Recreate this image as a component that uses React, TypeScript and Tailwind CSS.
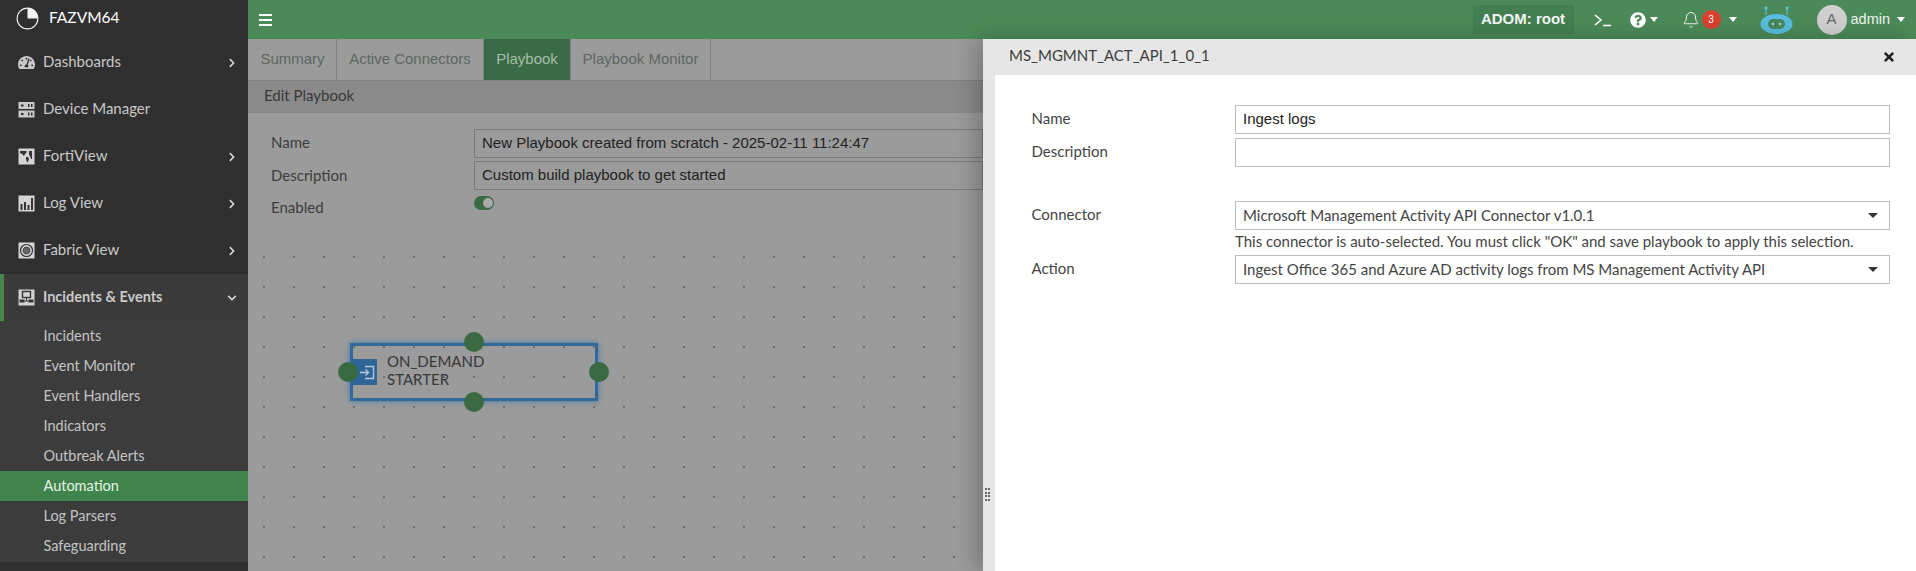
import React from "react";
import { FaQuestionCircle, FaTachometerAlt, FaChevronRight, FaChevronDown, FaTimes } from "react-icons/fa";
import { Bell } from "lucide-react";

const lato = "font-['Lato','Noto_Sans',sans-serif]";
const arial = "font-['Liberation_Sans',Arial,sans-serif]";

function Tile({ children }: { children: React.ReactNode }) {
  return <svg width="17" height="17" viewBox="0 0 17 17" className="shrink-0">{children}</svg>;
}

const DeviceIcon = () => (
  <Tile>
    <rect x="0.5" y="1" width="16" height="7" fill="#c9c9c9" />
    <rect x="0.5" y="9.5" width="16" height="7" fill="#c9c9c9" />
    <rect x="3" y="3.5" width="2.5" height="2" fill="#333" />
    <rect x="3" y="12" width="2.5" height="2" fill="#333" />
    <rect x="10" y="3" width="1.5" height="3" fill="#333" />
    <rect x="13" y="3" width="1.5" height="3" fill="#333" />
    <rect x="10" y="11.5" width="1.5" height="3" fill="#333" />
    <rect x="13" y="11.5" width="1.5" height="3" fill="#333" />
  </Tile>
);
const GlobeIcon = () => (
  <Tile>
    <rect x="0.5" y="0.5" width="16" height="16" fill="#d4d4d4" />
    <path d="M2 3h6l1 1-2 2-1 2-2-2-2-1zM8 9l2 0 1 2-1 3-1 0-1-3zM11 3h3v8l-1 0-1-3-1-1z" fill="#333" />
  </Tile>
);
const LogIcon = () => (
  <Tile>
    <rect x="0.5" y="0.5" width="16" height="16" fill="#d4d4d4" />
    <rect x="2.5" y="9" width="2" height="6" fill="#333" />
    <rect x="6" y="7" width="2" height="8" fill="#333" />
    <rect x="9.5" y="10" width="2" height="5" fill="#333" />
    <rect x="13" y="3" width="2" height="12" fill="#333" />
  </Tile>
);
const FabricIcon = () => (
  <Tile>
    <rect x="0.5" y="0.5" width="16" height="16" fill="#d4d4d4" />
    <circle cx="8.5" cy="8.5" r="6" fill="none" stroke="#333" strokeWidth="1.2" />
    <circle cx="8.5" cy="8.5" r="3.4" fill="#666" stroke="#333" strokeWidth="0.8" />
  </Tile>
);
const IncidentIcon = () => (
  <Tile>
    <rect x="0.5" y="0.5" width="16" height="16" fill="#d4d4d4" />
    <rect x="4.5" y="2.5" width="8" height="6" fill="none" stroke="#333" strokeWidth="1.4" />
    <rect x="1.5" y="10.5" width="5" height="3" fill="#333" />
    <rect x="10.5" y="10.5" width="5" height="3" fill="#333" />
    <path d="M8.5 8.5v3M6.5 12h4" stroke="#333" />
  </Tile>
);

const topItems = [
  { label: "Dashboards", icon: <FaTachometerAlt className="text-[17px] text-[#c9c9c9] shrink-0" />, arrow: true },
  { label: "Device Manager", icon: <DeviceIcon />, arrow: false },
  { label: "FortiView", icon: <GlobeIcon />, arrow: true },
  { label: "Log View", icon: <LogIcon />, arrow: true },
  { label: "Fabric View", icon: <FabricIcon />, arrow: true },
];
const subItems = ["Incidents", "Event Monitor", "Event Handlers", "Indicators", "Outbreak Alerts", "Automation", "Log Parsers", "Safeguarding"];

function Sidebar() {
  return (
    <aside className={`w-[248px] shrink-0 h-full bg-[#2f2f2f] flex flex-col ${lato}`}>
      <div className="h-[39px] flex items-center pl-[16px] pb-[3px] gap-[10px] text-white text-[15.5px]">
        <svg width="23" height="23" viewBox="0 0 23 23">
          <circle cx="11.5" cy="11.5" r="10.4" fill="none" stroke="#f2f2f2" strokeWidth="1.1" />
          <path d="M11.5 1A10.5 10.5 0 0 1 22 11.5H11.5Z" fill="#f2f2f2" />
        </svg>
        <span>FAZVM64</span>
      </div>
      {topItems.map((it) => (
        <div key={it.label} className="h-[47px] flex items-center pl-[18px] pr-[11px] text-[15px] text-[#c9c9c9]">
          <span className="w-[25px] flex">{it.icon}</span>
          <span className="flex-1 relative -top-[1px]">{it.label}</span>
          {it.arrow && <FaChevronRight className="text-[10px] text-[#d8d8d8]" />}
        </div>
      ))}
      <div className="h-[47px] flex items-center bg-[#3a3a3a] border-l-[4px] border-[#47874f] pl-[14px] pr-[11px] text-[14.5px] font-bold text-[#c9c9c9]">
        <span className="w-[25px] flex"><IncidentIcon /></span>
        <span className="flex-1 relative -top-[1px]">Incidents &amp; Events</span>
        <FaChevronDown className="text-[10px] text-[#d8d8d8]" />
      </div>
      <div className="bg-[#3c3c3c] pb-[1px]">
        {subItems.map((s) => (
          <div
            key={s}
            className={`h-[30px] flex items-center pl-[43.5px] text-[14.5px] ${s === "Automation" ? "bg-[#41834c] text-[#e4f5e4]" : "text-[#c4c4c4]"}`}
          >
            {s}
          </div>
        ))}
      </div>
    </aside>
  );
}

function TopBar() {
  return (
    <header className={`h-[39px] shrink-0 bg-[#4b8a58] flex items-center text-white ${arial}`}>
      <div className="ml-[11px] flex flex-col gap-[3px] w-[13px]">
        <span className="h-[2px] bg-white" />
        <span className="h-[2px] bg-white" />
        <span className="h-[2px] bg-white" />
      </div>
      <div className="ml-auto flex items-center h-full">
        <div className="h-[29px] w-[101px] bg-[#437f50] flex items-center justify-center text-[15px] font-bold text-[#f4f4f4]">ADOM: root</div>
        <svg width="18" height="14" viewBox="0 0 18 14" className="ml-[20px]" fill="none" stroke="#fff" strokeWidth="1.6">
          <path d="M1 2l6 5-6 5" />
          <path d="M9 12.5h8" />
        </svg>
        <FaQuestionCircle className="ml-[18px] text-[16px] text-white" />
        <span className="ml-[4px] w-0 h-0 border-x-[4.5px] border-x-transparent border-t-[5px] border-t-white" />
        <Bell size={18} strokeWidth={1.2} className="ml-[24px] text-white" />
        <span className="ml-[2px] w-[19px] h-[19px] rounded-full bg-[#d8402f] text-[10px] text-white flex items-center justify-center">3</span>
        <span className="ml-[8px] w-0 h-0 border-x-[4.5px] border-x-transparent border-t-[5px] border-t-white" />
        <svg width="33" height="30" viewBox="0 0 33 30" className="ml-[23px]">
          <path d="M6 2v8M27 2v8" stroke="#5cc0de" strokeWidth="1.2" />
          <circle cx="6" cy="3" r="1.6" fill="#5cc0de" />
          <circle cx="27" cy="3" r="1.6" fill="#5cc0de" />
          <ellipse cx="16.5" cy="19" rx="16" ry="10" fill="#58bde0" />
          <rect x="8" y="14" width="17" height="10" rx="5" fill="#47875a" />
          <circle cx="13" cy="19" r="1.2" fill="#9fd8ea" />
          <circle cx="20" cy="19" r="1.2" fill="#9fd8ea" />
        </svg>
        <span className="ml-[24px] w-[30px] h-[30px] rounded-full bg-[#cfcfcf] text-[#666] text-[15px] flex items-center justify-center">A</span>
        <span className="ml-[4px] text-[14.5px] text-[#eef5ef]">admin</span>
        <span className="ml-[7px] mr-[11px] w-0 h-0 border-x-[4.5px] border-x-transparent border-t-[5px] border-t-white" />
      </div>
    </header>
  );
}

const tabs = [
  { label: "Summary", w: "w-[88px]" },
  { label: "Active Connectors", w: "w-[147px]" },
  { label: "Playbook", w: "w-[87px]", active: true },
  { label: "Playbook Monitor", w: "w-[140px]" },
];

function Main() {
  const row = `flex items-start h-[32px] ${lato} text-[15px] text-[#3d3d3d]`;
  const input = `flex-1 h-[29px] border border-[#7a7a7a] flex items-center pl-[7px] text-[15px] text-[#222] whitespace-nowrap ${arial}`;
  return (
    <main className="flex-1 min-w-0 h-full flex flex-col bg-[#9b9b9b] overflow-hidden">
      <div className={`h-[42px] shrink-0 flex border-b border-[#7f7f7f] pl-[1px] ${arial} text-[15px]`}>
        {tabs.map((t) => (
          <div
            key={t.label}
            className={`${t.w} flex items-center justify-center border-r border-[#808080] ${t.active ? "bg-[#3a6a46] text-[#a5bfa9]" : "text-[#5f6662]"}`}
          >
            {t.label}
          </div>
        ))}
      </div>
      <div className={`h-[32px] shrink-0 bg-[#8a8a8a] flex items-center pl-[16px] pb-[3px] text-[15px] text-[#383838] ${lato}`}>Edit Playbook</div>
      <div className="relative flex-1 bg-[radial-gradient(circle,#707070_1px,transparent_1.3px)] bg-[size:30px_30px] bg-[position:1px_9px]">
        <div className="bg-[#9b9b9b] h-[130px] pt-[16px] pl-[23px]">
          <div className={row}>
            <span className="w-[203px] h-[27px] flex items-center">Name</span>
            <div className={input}>New Playbook created from scratch - 2025-02-11 11:24:47</div>
          </div>
          <div className={row}>
            <span className="w-[203px] h-[28px] flex items-center">Description</span>
            <div className={input}>Custom build playbook to get started</div>
          </div>
          <div className={row}>
            <span className="w-[203px] h-[29px] flex items-center">Enabled</span>
            <span className="mt-[3px] w-[20px] h-[14px] rounded-full bg-[#3a6a46] flex items-center justify-end pr-[1px]">
              <span className="w-[10px] h-[10px] rounded-full bg-[#a9a9a9]" />
            </span>
          </div>
        </div>
        <div className="absolute left-[102px] top-[230px] w-[248px] h-[58px] border-[3px] border-[#31689a] shadow-[0_0_6px_#3f78ad]">
          <div className={`h-full flex items-center pl-[34px] pb-[4px] text-[15px] leading-[18px] text-[#383838] ${lato}`}>
            <span>ON_DEMAND<br />STARTER</span>
          </div>
          <div className="absolute -left-[1px] top-[13px] w-[25px] h-[26px] bg-[#2f6597] flex items-center justify-end pr-[2px]">
            <svg width="15" height="15" viewBox="0 0 15 15" fill="none" stroke="#b7c6d4" strokeWidth="1.4">
              <path d="M0 7.5h8M5.5 4.5l3 3-3 3" />
              <path d="M5 1.5h8.5v12H5" />
            </svg>
          </div>
          <span className="absolute -left-[15px] top-[16px] w-[20px] h-[20px] rounded-full bg-[#3a6a42]" />
          <span className="absolute left-[236px] top-[16px] w-[20px] h-[20px] rounded-full bg-[#3a6a42]" />
          <span className="absolute left-[111px] -top-[14px] w-[20px] h-[20px] rounded-full bg-[#3a6a42]" />
          <span className="absolute left-[111px] top-[46px] w-[20px] h-[20px] rounded-full bg-[#3a6a42]" />
        </div>
      </div>
    </main>
  );
}

function Caret() {
  return <span className="ml-auto mr-[11px] w-0 h-0 border-x-[5px] border-x-transparent border-t-[5px] border-t-[#333]" />;
}

function Panel() {
  const label = "w-[203px] text-[15px] text-[#444]";
  const box = "flex-1 h-[29px] border border-[#bdbdbd] flex items-center pl-[7px]";
  return (
    <section className={`relative w-[933px] shrink-0 h-full bg-[#e6e6e6] flex flex-col shadow-[-8px_0_20px_rgba(0,0,0,0.22)] ${lato}`}>
      <div className="h-[36px] shrink-0 flex items-center pl-[26px] pr-[20px] text-[15px] text-[#3d3d3d]">
        <span className="relative -top-[2px]">MS_MGMNT_ACT_API_1_0_1</span>
        <FaTimes className="ml-auto text-[14px] text-[#222]" />
      </div>
      <div className="flex-1 ml-[12px] bg-white pl-[36.5px] pr-[26px] pt-[30px]">
        <div className="flex items-center h-[29px]">
          <span className={`w-[203.5px] text-[15px] text-[#444] -mt-[2px]`}>Name</span>
          <div className={`${box} ${arial} text-[15px] text-[#222]`}>Ingest logs</div>
        </div>
        <div className="flex items-center h-[29px] mt-[4px]">
          <span className={`w-[203.5px] text-[15px] text-[#444] -mt-[2px]`}>Description</span>
          <div className={box} />
        </div>
        <div className="flex items-center h-[29px] mt-[34px]">
          <span className={`w-[203.5px] text-[15px] text-[#444] -mt-[2px]`}>Connector</span>
          <div className={`${box} text-[15px] text-[#444]`}>
            Microsoft Management Activity API Connector v1.0.1
            <Caret />
          </div>
        </div>
        <div className="pl-[203.5px] h-[25px] pb-[2px] flex items-center text-[15px] text-[#444]">
          This connector is auto-selected. You must click "OK" and save playbook to apply this selection.
        </div>
        <div className="flex items-center h-[29px]">
          <span className={`w-[203.5px] text-[15px] text-[#444] -mt-[2px]`}>Action</span>
          <div className={`${box} text-[15px] text-[#444]`}>
            Ingest Office 365 and Azure AD activity logs from MS Management Activity API
            <Caret />
          </div>
        </div>
      </div>
      <div className="absolute left-[2px] top-[449px] grid grid-cols-2 gap-x-[1px] gap-y-[1.5px]">
        {Array.from({ length: 8 }).map((_, i) => (
          <span key={i} className="w-[2px] h-[2px] bg-[#666]" />
        ))}
      </div>
    </section>
  );
}

export default function App() {
  return (
    <div className="w-[1916px] h-[571px] flex overflow-hidden">
      <Sidebar />
      <div className="flex-1 min-w-0 h-full flex flex-col">
        <TopBar />
        <div className="flex-1 min-h-0 flex">
          <Main />
          <Panel />
        </div>
      </div>
    </div>
  );
}
